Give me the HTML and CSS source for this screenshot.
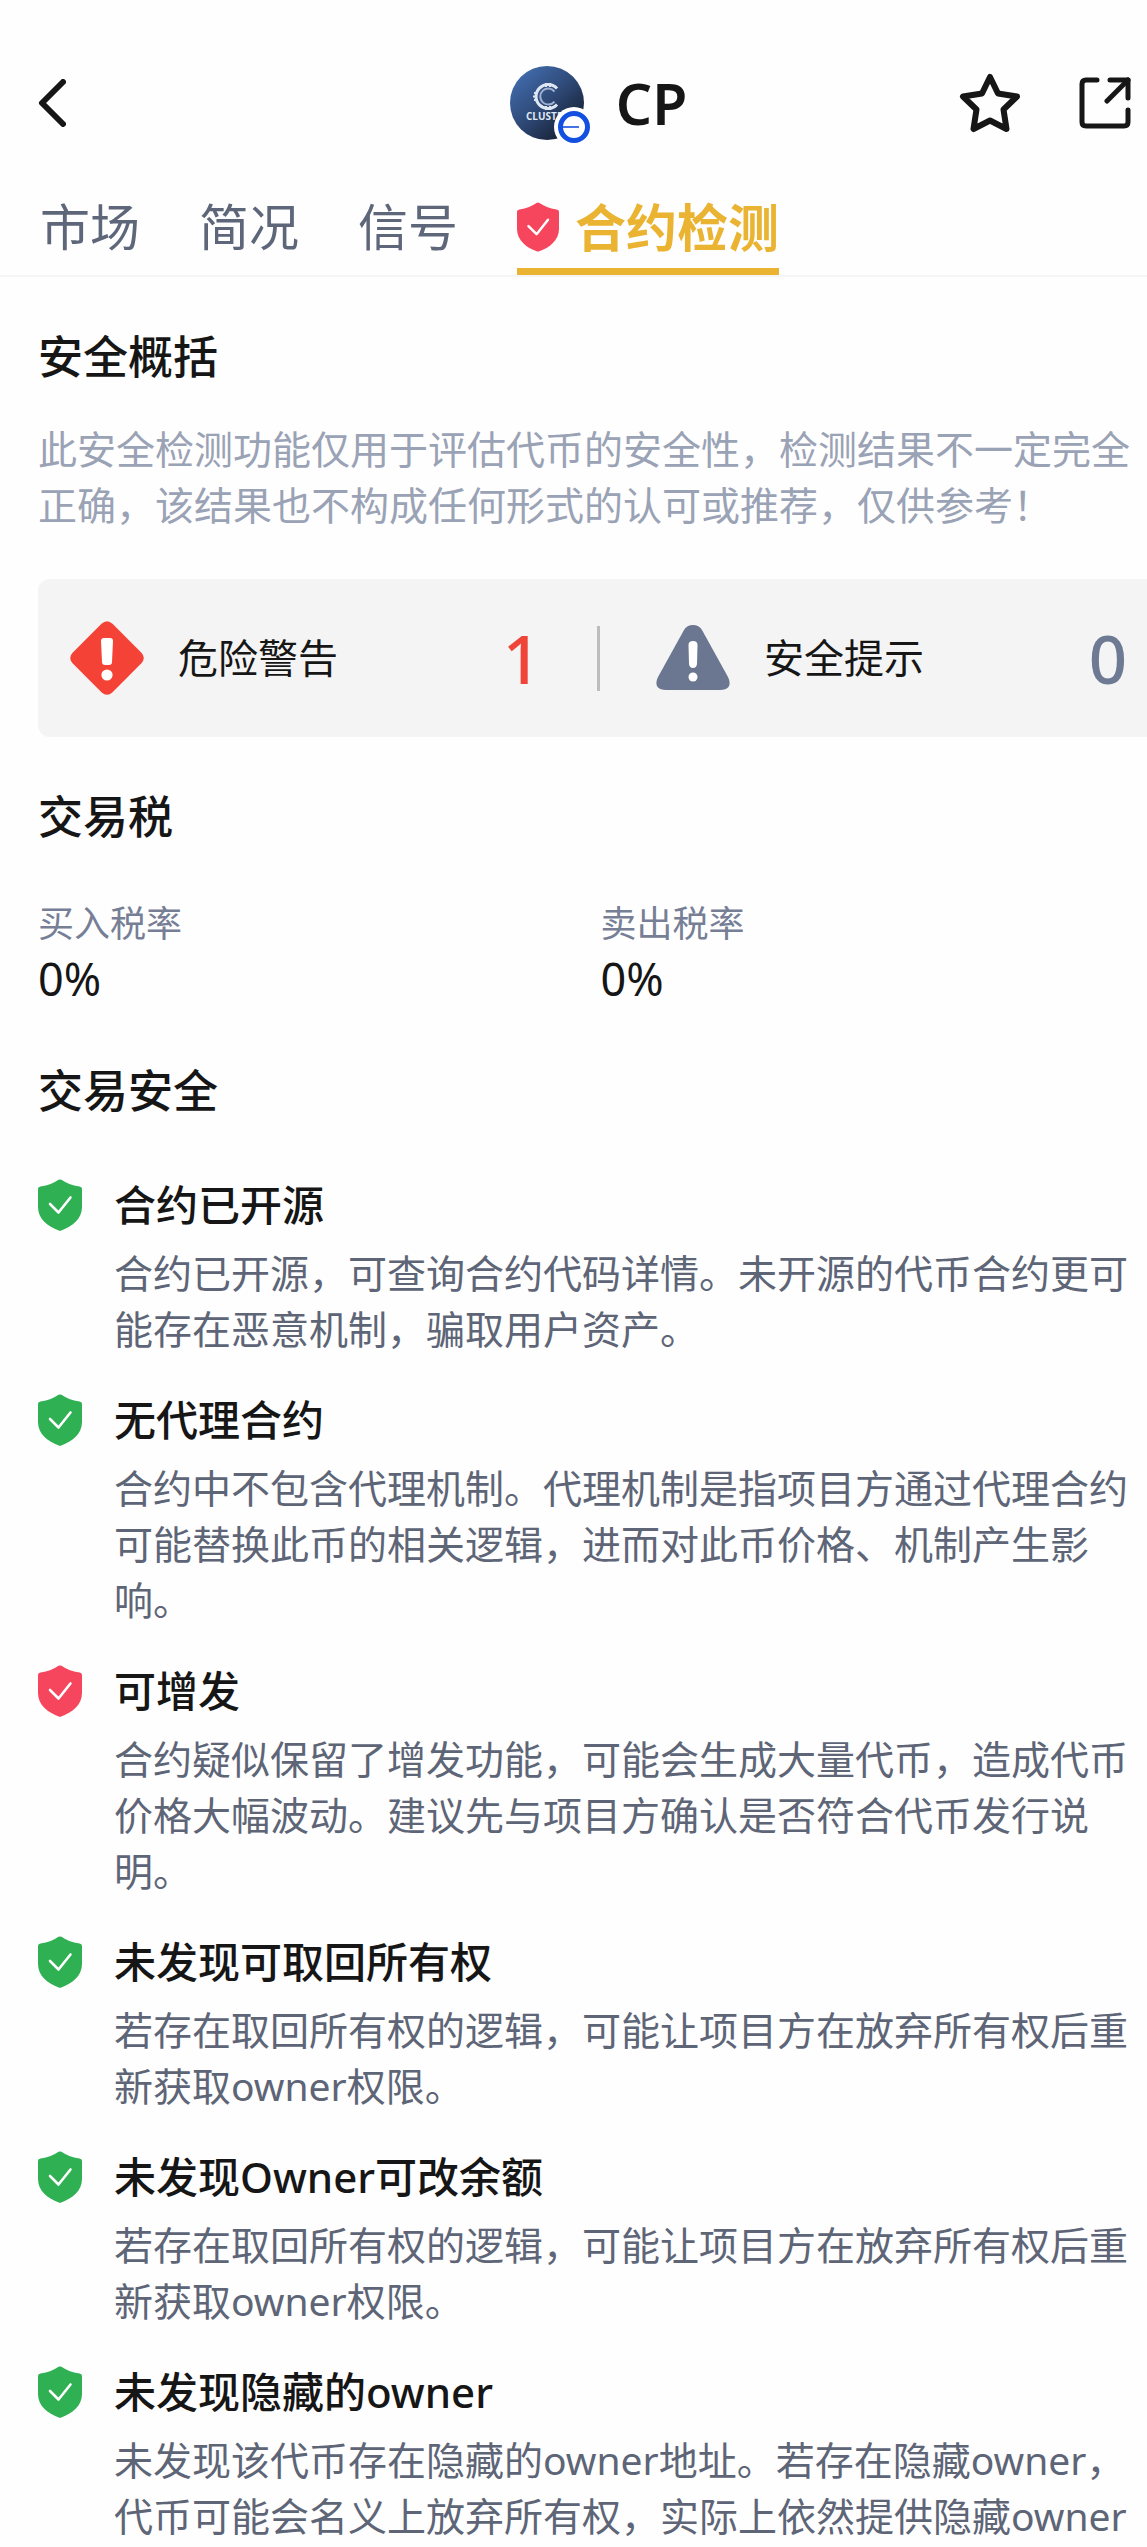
FILE: index.html
```html
<!DOCTYPE html>
<html lang="zh-CN">
<head>
    <meta charset="UTF-8">
    <meta name="viewport" content="width=device-width, initial-scale=1.0">
    <title>CP 合约检测</title>
    <link rel="stylesheet" href="styles.css">
</head>
<body>
    <!-- shared shield icon -->
    <svg class="defs" width="0" height="0" aria-hidden="true">
        <symbol id="shield" viewBox="0 0 44 52">
            <path d="M20.5 0.8 Q22 0 23.5 0.8 C28 3.8 34 6.6 41.5 7.6 Q44 8 44 10 V28 C44 40 34 47.5 23.3 51.4 Q22 52 20.7 51.4 C10 47.5 0 40 0 28 V10 Q0 8 2.5 7.6 C10 6.6 16 3.8 20.5 0.8 Z" fill="currentColor"/>
            <path d="M12 25 L20.5 33.5 L32.5 18.5" fill="none" stroke="#fff" stroke-width="2.6" stroke-linecap="round" stroke-linejoin="round"/>
        </symbol>
    </svg>

    <header class="header">
        <button class="icon-btn back" type="button" aria-label="返回">
            <svg width="28" height="48" viewBox="0 0 28 48" fill="none">
                <path d="M25 3 L4 24 L25 45" stroke="#161616" stroke-width="6" stroke-linecap="round" stroke-linejoin="round"/>
            </svg>
        </button>
        <div class="token">
            <div class="avatar">
                <svg width="74" height="74" viewBox="0 0 74 74">
                    <defs>
                        <linearGradient id="coin" x1="0" y1="0.1" x2="0.8" y2="1">
                            <stop offset="0" stop-color="#4470b4"/>
                            <stop offset="0.5" stop-color="#2f4a78"/>
                            <stop offset="1" stop-color="#141b2c"/>
                        </linearGradient>
                    </defs>
                    <circle cx="37" cy="37" r="37" fill="url(#coin)"/>
                    <path d="M47 22.5 A12 12 0 1 0 47 38.5" fill="none" stroke="#dfe7f3" stroke-width="3"/>
                    <path d="M44.5 25.5 A8 8 0 1 0 44.5 35.5" fill="none" stroke="#9fb2d0" stroke-width="2"/>
                    <path d="M36 21 V17 M40 21 V17 M36 40 V44 M40 40 V44 M28 27 H24 M27 30.5 H23 M28 34 H24" stroke="#dfe7f3" stroke-width="2"/>
                    <text x="16" y="54" class="avatar-text">CLUSTER</text>
                </svg>
                <svg class="chain" width="40" height="40" viewBox="0 0 40 40">
                    <circle cx="20" cy="20" r="20" fill="#fff"/>
                    <circle cx="20" cy="20" r="13.5" fill="#fff" stroke="#1450e0" stroke-width="5"/>
                    <path d="M8 20 H25" stroke="#1450e0" stroke-width="1.6"/>
                </svg>
            </div>
            <h1 class="symbol">CP</h1>
        </div>
        <div class="actions">
            <button class="icon-btn" type="button" aria-label="收藏">
                <svg width="62" height="60" viewBox="0 0 62 60" fill="none">
                    <path d="M31 4 L39 20.5 L58 23.5 L44.5 36.5 L47.5 56 L31 47.5 L14.5 56 L17.5 36.5 L4 23.5 L23 20.5 Z" stroke="#161616" stroke-width="6" stroke-linejoin="round"/>
                </svg>
            </button>
            <button class="icon-btn" type="button" aria-label="分享">
                <svg width="52" height="52" viewBox="0 0 52 52" fill="none" stroke="#161616" stroke-width="5" stroke-linecap="round" stroke-linejoin="round">
                    <path d="M18 3 H7 Q3 3 3 7 V45 Q3 49 7 49 H45 Q49 49 49 45 V33"/>
                    <path d="M31 3 H49 V21"/>
                    <path d="M49 3 L28 24"/>
                </svg>
            </button>
        </div>
    </header>

    <nav class="tabs">
        <a class="tab" href="#market">市场</a>
        <a class="tab" href="#intro">简况</a>
        <a class="tab" href="#signal">信号</a>
        <a class="tab active" href="#contract">
            <svg class="tab-shield"><use href="#shield"/></svg>
            合约检测
        </a>
    </nav>

    <main class="content" id="contract">
        <section class="summary">
            <h2>安全概括</h2>
            <p class="intro">此安全检测功能仅用于评估代币的安全性，检测结果不一定完全正确，该结果也不构成任何形式的认可或推荐，仅供参考！</p>
            <div class="counts">
                <div class="count">
                    <svg width="74" height="74" viewBox="0 0 74 74">
                        <path d="M31.5 2.8 Q37 -2.4 42.5 2.8 L71.2 31.5 Q76.4 37 71.2 42.5 L42.5 71.2 Q37 76.4 31.5 71.2 L2.8 42.5 Q-2.4 37 2.8 31.5 Z" fill="#f44336"/>
                        <path d="M31 20 Q31 17 34 17 H40 Q43 17 43 20 L42 41 Q42 44 39 44 H35 Q32 44 32 41 Z" fill="#fff"/>
                        <circle cx="37" cy="54" r="5.6" fill="#fff"/>
                    </svg>
                    <span class="count-label">危险警告</span>
                    <span class="count-num danger">1</span>
                </div>
                <div class="divider"></div>
                <div class="count">
                    <svg width="74" height="74" viewBox="0 0 74 74">
                        <path d="M28 9 Q31 4 37 4 Q43 4 46 9 L72 56 Q75 62 72.5 66 Q70 69 64 69 H10 Q4 69 1.5 66 Q-1 62 2 56 Z" fill="#6b7790"/>
                        <path d="M32.5 24 Q32.5 20 37 20 Q41.5 20 41.5 24 L41 43 Q40.5 47 37 47 Q33.5 47 33 43 Z" fill="#fff"/>
                        <circle cx="37" cy="56" r="4.5" fill="#fff"/>
                    </svg>
                    <span class="count-label">安全提示</span>
                    <span class="count-num">0</span>
                </div>
            </div>
        </section>

        <section class="tax">
            <h2>交易税</h2>
            <dl class="rates">
                <div class="rate">
                    <dt>买入税率</dt>
                    <dd>0%</dd>
                </div>
                <div class="rate">
                    <dt>卖出税率</dt>
                    <dd>0%</dd>
                </div>
            </dl>
        </section>

        <section class="safety">
            <h2>交易安全</h2>
            <ul class="checks">
                <li class="check">
                    <svg class="check-icon"><use href="#shield"/></svg>
                    <div>
                        <h3>合约已开源</h3>
                        <p>合约已开源，可查询合约代码详情。未开源的代币合约更可能存在恶意机制，骗取用户资产。</p>
                    </div>
                </li>
                <li class="check">
                    <svg class="check-icon"><use href="#shield"/></svg>
                    <div>
                        <h3>无代理合约</h3>
                        <p>合约中不包含代理机制。代理机制是指项目方通过代理合约可能替换此币的相关逻辑，进而对此币价格、机制产生影响。</p>
                    </div>
                </li>
                <li class="check">
                    <svg class="check-icon risk"><use href="#shield"/></svg>
                    <div>
                        <h3>可增发</h3>
                        <p>合约疑似保留了增发功能，可能会生成大量代币，造成代币价格大幅波动。建议先与项目方确认是否符合代币发行说明。</p>
                    </div>
                </li>
                <li class="check">
                    <svg class="check-icon"><use href="#shield"/></svg>
                    <div>
                        <h3>未发现可取回所有权</h3>
                        <p>若存在取回所有权的逻辑，可能让项目方在放弃所有权后重新获取owner权限。</p>
                    </div>
                </li>
                <li class="check">
                    <svg class="check-icon"><use href="#shield"/></svg>
                    <div>
                        <h3>未发现Owner可改余额</h3>
                        <p>若存在取回所有权的逻辑，可能让项目方在放弃所有权后重新获取owner权限。</p>
                    </div>
                </li>
                <li class="check">
                    <svg class="check-icon"><use href="#shield"/></svg>
                    <div>
                        <h3>未发现隐藏的owner</h3>
                        <p>未发现该代币存在隐藏的owner地址。若存在隐藏owner，代币可能会名义上放弃所有权，实际上依然提供隐藏owner</p>
                    </div>
                </li>
            </ul>
        </section>
    </main>
</body>
</html>
```

FILE: styles.css
```css
* {
    box-sizing: border-box;
}
body {
    margin: 0;
    font-family: "Noto Sans", "Noto Sans CJK SC", sans-serif;
    color: #161616;
    background: #fefefe;
}
h1, h2, h3, p, ul, dl, dd {
    margin: 0;
    padding: 0;
}
svg {
    display: block;
    flex-shrink: 0;
}
.defs {
    position: absolute;
}
.header {
    display: grid;
    grid-template-columns: 1fr auto 1fr;
    align-items: center;
    padding: 66px 16px 52px 38px;
}
.icon-btn {
    padding: 0;
    border: 0;
    background: none;
    cursor: pointer;
}
.back {
    justify-self: start;
}
.token {
    display: flex;
    align-items: center;
    gap: 32px;
    padding-left: 28px;
}
.avatar {
    position: relative;
}
.avatar-text {
    font: 700 10px "Open Sans", sans-serif;
    fill: #dfe7f3;
}
.chain {
    position: absolute;
    right: -10px;
    bottom: -7px;
}
.symbol {
    font-size: 57px;
    font-weight: 600;
    line-height: 74px;
}
.actions {
    display: flex;
    align-items: center;
    justify-content: flex-end;
    gap: 58px;
}
.tabs {
    display: flex;
    gap: 59px;
    padding: 0 40px;
    border-bottom: 2px solid #f5f5f5;
}
.tab {
    display: flex;
    align-items: center;
    gap: 16px;
    padding-bottom: 6px;
    border-bottom: 7px solid transparent;
    font-size: 50px;
    line-height: 70px;
    color: #5e667a;
    text-decoration: none;
    white-space: nowrap;
}
.tab.active {
    font-size: 51px;
    font-weight: 700;
    color: #eab432;
    border-color: #eab432;
}
.tab-shield {
    width: 42px;
    height: 50px;
    color: #f6465d;
}
.content {
    padding: 48px 0 0 38px;
}
h2 {
    font-size: 45px;
    font-weight: 500;
    line-height: 64px;
}
.intro {
    margin-top: 32px;
    padding-right: 12px;
    font-size: 39px;
    line-height: 56px;
    color: #9aa2b5;
}
.counts {
    display: flex;
    align-items: center;
    gap: 56px;
    margin-top: 46px;
    padding: 42px 20px 42px 32px;
    background: #f4f4f4;
    border-radius: 12px 0 0 12px;
}
.count {
    display: flex;
    flex: 1;
    align-items: center;
}
.count-label {
    margin-left: 34px;
    font-size: 40px;
    line-height: 56px;
}
.count-num {
    margin-left: auto;
    font-size: 67px;
    font-weight: 500;
    line-height: 74px;
    color: #6e7a94;
}
.count-num.danger {
    color: #ef4539;
}
.divider {
    width: 3px;
    height: 65px;
    background: #bdbdbd;
}
.tax {
    margin-top: 48px;
}
.rates {
    display: grid;
    grid-template-columns: 1fr 1fr;
    gap: 16px;
    margin-top: 48px;
}
.rate dt {
    font-size: 36px;
    line-height: 54px;
    color: #777f96;
}
.rate dd {
    font-size: 45px;
    line-height: 56px;
}
.safety {
    margin-top: 52px;
}
.checks {
    display: flex;
    flex-direction: column;
    gap: 35px;
    margin-top: 54px;
    padding-right: 12px;
    list-style: none;
}
.check {
    display: flex;
    gap: 32px;
}
.check-icon {
    width: 44px;
    height: 52px;
    margin-top: 2px;
    color: #2fb052;
}
.check-icon.risk {
    color: #f6465d;
}
.check h3 {
    font-size: 42px;
    font-weight: 500;
    line-height: 56px;
}
.check p {
    margin-top: 12px;
    font-size: 39px;
    line-height: 56px;
    color: #5d6577;
}
```
